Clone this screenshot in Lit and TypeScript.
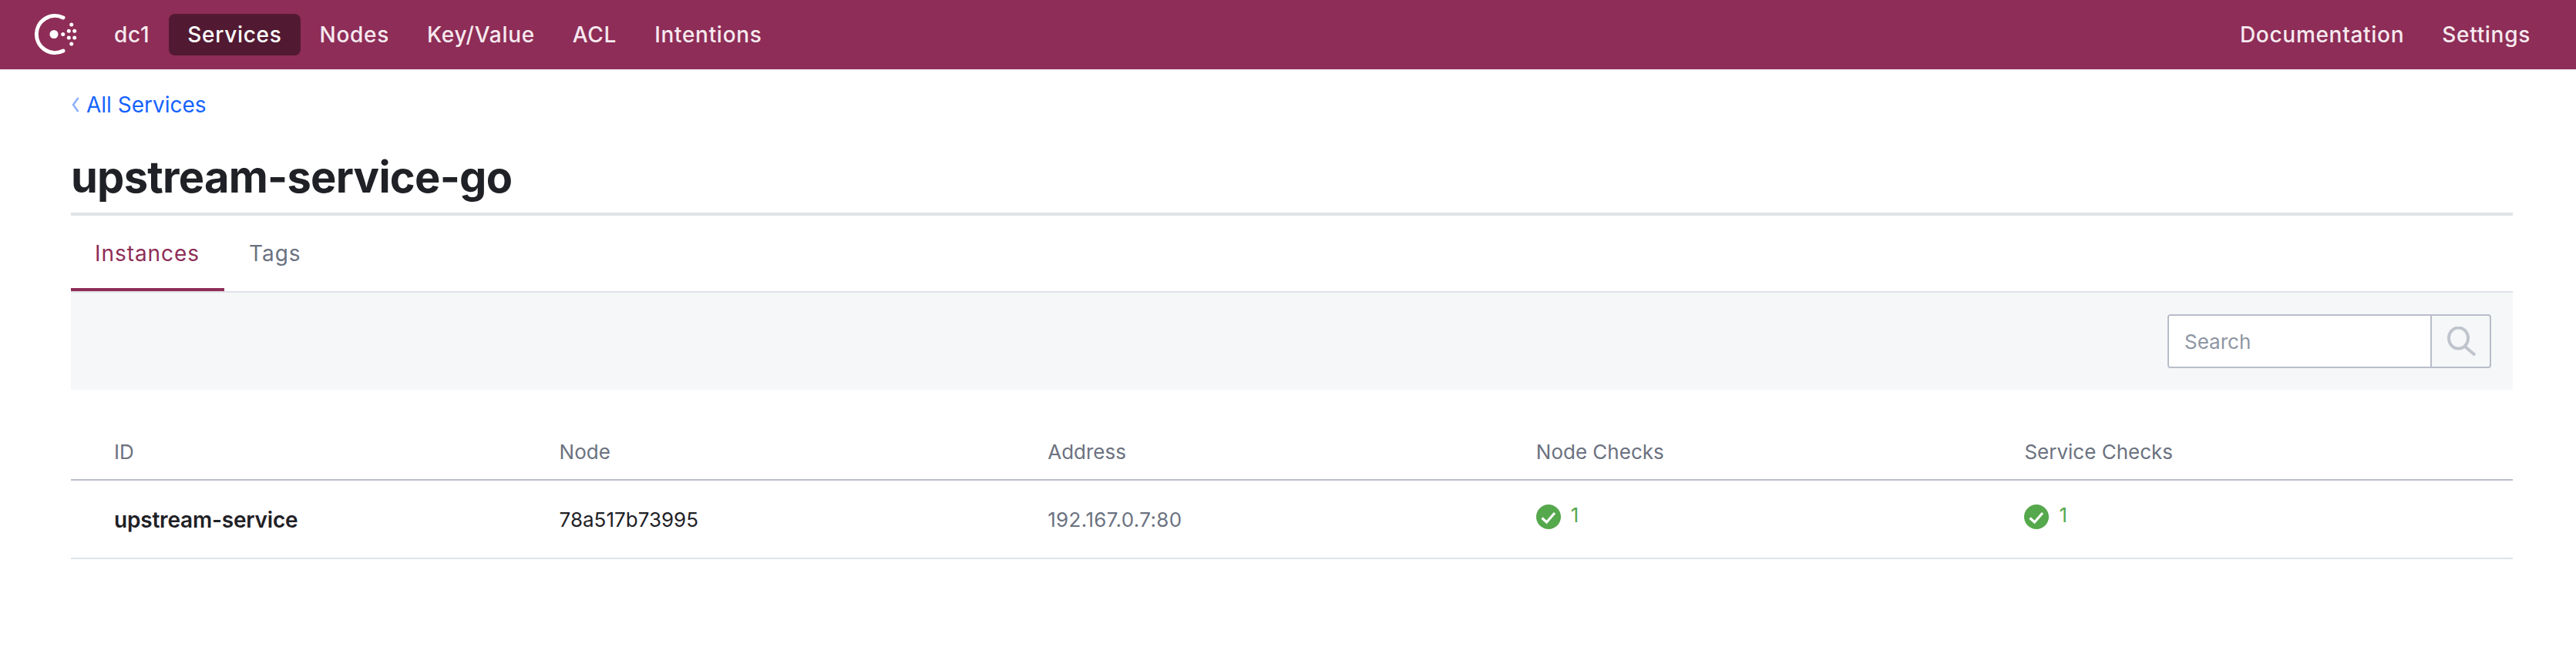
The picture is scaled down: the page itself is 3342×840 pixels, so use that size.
import { LitElement, css, html } from 'lit';
import { customElement } from 'lit/decorators.js';

const NAV_LEFT = ['Services', 'Nodes', 'Key/Value', 'ACL', 'Intentions'];
const NAV_RIGHT = ['Documentation', 'Settings'];
const COLUMNS = ['ID', 'Node', 'Address', 'Node Checks', 'Service Checks'];

const logo = html`
  <svg class="logo" width="56" height="54" viewBox="0 0 56 54" aria-hidden="true">
    <path d="M38 5 A24 24 0 1 0 38 48" fill="none" stroke="#fff" stroke-width="5" stroke-linecap="round"></path>
    <circle cx="26" cy="26.5" r="5.5" fill="#fff"></circle>
    <circle cx="37.7" cy="26.5" r="2.5" fill="#fff"></circle>
    <circle cx="48.7" cy="14" r="2.5" fill="#fff"></circle>
    <circle cx="45.3" cy="22.3" r="2.5" fill="#fff"></circle>
    <circle cx="52.7" cy="22.3" r="2.5" fill="#fff"></circle>
    <circle cx="45.3" cy="31" r="2.5" fill="#fff"></circle>
    <circle cx="52.7" cy="31" r="2.5" fill="#fff"></circle>
    <circle cx="48.7" cy="39" r="2.5" fill="#fff"></circle>
  </svg>
`;

const checkIcon = html`
  <svg class="check" width="32" height="32" viewBox="0 0 32 32" aria-hidden="true">
    <circle cx="16" cy="16" r="16" fill="#55a84c"></circle>
    <path d="M7.5 17.5 L13.5 23 L24 11" fill="none" stroke="#fff" stroke-width="3.2"></path>
  </svg>
`;

@customElement('app-root')
export class AppRoot extends LitElement {
  static styles = css`
    :host {
      display: block;
      font-family: Inter, "Liberation Sans", sans-serif;
      background: #fff;
      min-height: 840px;
    }

    header {
      align-items: center;
      background: #8e2d57;
      color: #f6e9ef;
      display: flex;
      font-size: 28px;
      font-weight: 500;
      height: 90px;
      letter-spacing: 0.7px;
      padding: 0 35px 0 44px;
    }

    .logo {
      flex: none;
      margin-right: 24px;
    }

    nav {
      display: flex;
      gap: 1px;
    }

    nav.right {
      margin-left: auto;
    }

    nav a {
      align-items: center;
      border-radius: 8px;
      display: flex;
      height: 54px;
      padding: 0 24px;
    }

    nav a.selected {
      background: #521a32;
      color: #fff;
    }

    main {
      padding: 0 82px 0 92px;
    }

    .crumb {
      align-items: center;
      color: #1563ff;
      display: flex;
      font-size: 28px;
      gap: 8px;
      height: 92px;
    }

    .crumb svg {
      flex: none;
    }

    h1 {
      border-bottom: 4px solid #dfe2e7;
      color: #1f2126;
      font-size: 56px;
      font-weight: 700;
      height: 94px;
      letter-spacing: -0.75px;
      line-height: 97px;
      margin: 0;
    }

    .tabs {
      border-bottom: 2px solid #dfe2e7;
      display: flex;
      font-size: 28px;
      height: 98px;
      letter-spacing: 0.95px;
    }

    .tabs a {
      align-items: center;
      border-bottom: 4px solid transparent;
      box-sizing: border-box;
      color: #6b7280;
      display: flex;
      height: 98px;
      padding: 3px 30px 0 32px;
    }

    .tabs a.selected {
      border-bottom-color: #8e2d57;
      color: #8e2d57;
      padding: 3px 32px 0 31px;
    }

    .filter {
      align-items: center;
      background: #f6f7f9;
      display: flex;
      height: 126px;
      justify-content: flex-end;
      padding-right: 28px;
    }

    .search {
      border: 2px solid #b8bdc9;
      border-radius: 4px;
      box-sizing: border-box;
      display: flex;
      height: 70px;
      width: 420px;
    }

    .search .input {
      align-items: center;
      background: #fff;
      border-radius: 2px 0 0 2px;
      color: #8e96a3;
      display: flex;
      flex: 1;
      font-size: 26px;
      padding-left: 20px;
    }

    .search .btn {
      align-items: center;
      border-left: 2px solid #b8bdc9;
      display: flex;
      flex: none;
      justify-content: center;
      padding-left: 3px;
      width: 72px;
    }

    .row {
      display: grid;
      grid-template-columns: repeat(5, 1fr);
    }

    .row > div {
      align-items: center;
      display: flex;
    }

    .row > div:first-child {
      padding-left: 56px;
    }

    .head {
      border-bottom: 2px solid #b8bdc9;
      box-sizing: border-box;
      color: #6b7280;
      font-size: 26px;
      height: 118px;
      padding-top: 45px;
    }

    .body {
      border-bottom: 2px solid #dfe2e7;
      box-sizing: border-box;
      color: #1f2126;
      font-size: 26px;
      height: 102px;
    }

    .body > .name {
      font-size: 28px;
      font-weight: 600;
      letter-spacing: -0.2px;
      padding-top: 2px;
    }

    .muted {
      color: #6b7280;
      letter-spacing: 0.35px;
    }

    .checks {
      color: #55a84c;
      gap: 13px;
      padding-bottom: 6px;
    }

    .checks span {
      margin-bottom: 6px;
    }
  `;

  render() {
    return html`
      <header>
        ${logo}
        <nav>
          <a>dc1</a>
          ${NAV_LEFT.map((item) => html`<a class=${item === 'Services' ? 'selected' : ''}>${item}</a>`)}
        </nav>
        <nav class="right">
          ${NAV_RIGHT.map((item) => html`<a>${item}</a>`)}
        </nav>
      </header>
      <main>
        <div class="crumb">
          <svg width="12" height="22" viewBox="0 0 12 22" aria-hidden="true">
            <path d="M9.5 2 L3 11 L9.5 20" fill="none" stroke="#8db0fb" stroke-width="2.5"></path>
          </svg>
          <span>All Services</span>
        </div>
        <h1>upstream-service-go</h1>
        <div class="tabs">
          <a class="selected">Instances</a>
          <a>Tags</a>
        </div>
        <div class="filter">
          <div class="search">
            <div class="input">Search</div>
            <div class="btn">
              <svg width="38" height="38" viewBox="0 0 38 38" aria-hidden="true">
                <ellipse cx="14.5" cy="15" rx="12.5" ry="13.5" fill="none" stroke="#bfc4cd" stroke-width="4"></ellipse>
                <path d="M23 26 L36 37" stroke="#bfc4cd" stroke-width="4" fill="none"></path>
              </svg>
            </div>
          </div>
        </div>
        <div class="row head">
          ${COLUMNS.map((col) => html`<div>${col}</div>`)}
        </div>
        <div class="row body">
          <div class="name">upstream-service</div>
          <div>78a517b73995</div>
          <div class="muted">192.167.0.7:80</div>
          <div class="checks">${checkIcon}<span>1</span></div>
          <div class="checks">${checkIcon}<span>1</span></div>
        </div>
      </main>
    `;
  }
}
